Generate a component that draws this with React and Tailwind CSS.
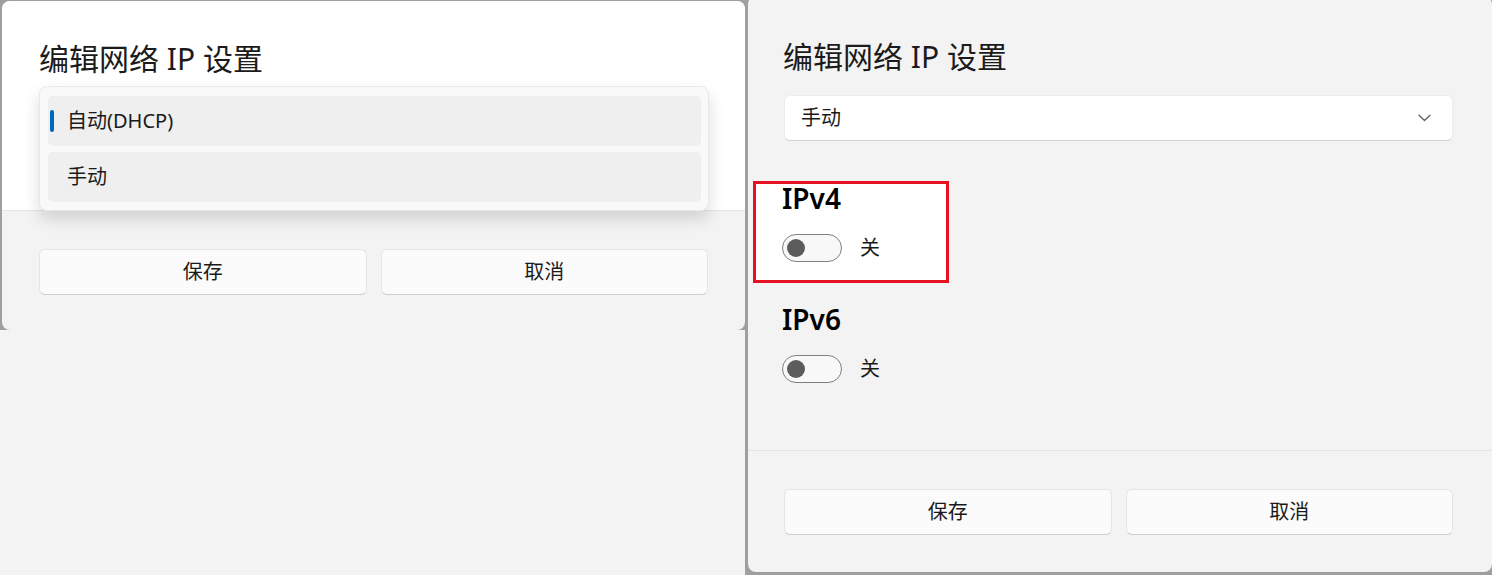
import React from "react";

function Button({ children }) {
  return (
    <button className="flex-1 h-[46px] rounded-[6px] bg-[#fbfbfb] border border-[#e5e5e5] border-b-[#cfcfcf] text-[20px] leading-[28px] text-[#1a1a1a] flex items-center justify-center">
      {children}
    </button>
  );
}

function Toggle() {
  return (
    <div className="w-[60px] h-[28px] rounded-full border-[1.5px] border-[#7f7f7f] bg-[#f8f8f8] flex items-center pl-[4px] shrink-0">
      <div className="w-[18px] h-[18px] rounded-full bg-[#5c5c5c]" />
    </div>
  );
}

function Section({ title, className = "" }) {
  return (
    <div className={"relative " + className}>
      <div className="text-[28px] leading-[36px] font-semibold text-[#000000]">{title}</div>
      <div className="mt-[18px] flex items-center gap-[18px]">
        <Toggle />
        <span className="text-[20px] leading-[28px] text-[#1a1a1a]">关</span>
      </div>
    </div>
  );
}

export default function App() {
  return (
    <div className="w-[1492px] h-[575px] overflow-hidden flex bg-[#f3f3f3] font-['Noto_Sans','Noto_Sans_CJK_SC',sans-serif]">
      {/* Left column */}
      <div className="w-[745px] flex flex-col shrink-0">
        <div className="h-[330px] bg-[#9f9f9f] pt-px pl-[2px]">
          <div className="relative h-full rounded-lg overflow-hidden flex flex-col bg-[#f3f3f3]">
            <div className="bg-white px-[37px] pt-[40px] pb-[69px]">
              <h1 className="text-[30px] leading-[36px] font-normal text-[#1b1b1b]">编辑网络 IP 设置</h1>
              <div className="mt-[18px] h-[46px] rounded-[6px] bg-white" />
            </div>
            <div className="flex-1 border-t border-[#e5e5e5] px-[37px] pt-[38px] flex gap-[14px]">
              <Button>保存</Button>
              <Button>取消</Button>
            </div>

            {/* Open dropdown popup */}
            <div className="absolute left-[37px] top-[85px] w-[670px] h-[125px] rounded-[8px] bg-[#f9f9f9] border border-[#e8e8e8] shadow-[0_8px_16px_rgba(0,0,0,0.14)] pl-[8px] pr-[7px] pt-[9px] flex flex-col gap-[6px]">
              <div className="relative h-[50px] rounded-[5px] bg-[#efefef] flex items-center pl-[19px]">
                <div className="absolute left-[2px] top-[14px] w-[4px] h-[22px] rounded-full bg-[#0067c0]" />
                <span className="text-[20px] leading-[28px] text-[#1a1a1a]">自动(DHCP)</span>
              </div>
              <div className="h-[50px] rounded-[5px] bg-[#efefef] flex items-center pl-[19px]">
                <span className="text-[20px] leading-[28px] text-[#1a1a1a]">手动</span>
              </div>
            </div>
          </div>
        </div>
        <div className="flex-1 bg-[#f3f3f3]" />
      </div>

      {/* Right column */}
      <div className="flex-1 bg-[#9f9f9f] pl-[3px] overflow-hidden">
        <div className="relative -mt-[4px] h-[576px] rounded-lg bg-[#f3f3f3] flex flex-col">
          <div className="absolute left-[5px] top-[185px] w-[196px] h-[102px] border-[3px] border-[#e81123] bg-white" />
          <div className="flex-1 pl-[36px] pr-[39px] pt-[43px]">
            <h1 className="relative text-[30px] leading-[36px] font-normal text-[#1b1b1b] -ml-px">编辑网络 IP 设置</h1>
            <div className="relative mt-[20px] h-[46px] rounded-[6px] bg-white border border-[#ececec] border-b-[#d2d2d2] flex items-center pl-[16px] pr-[21px]">
              <span className="flex-1 text-[20px] leading-[28px] text-[#1a1a1a]">手动</span>
              <svg width="13" height="8" viewBox="0 0 13 8" fill="none">
                <path d="M1 1.2 L6.5 6.5 L12 1.2" stroke="#5f5f5f" strokeWidth="1.3" strokeLinecap="round" strokeLinejoin="round" />
              </svg>
            </div>
            <Section title="IPv4" className="mt-[39px] -ml-[2px]" />
            <Section title="IPv6" className="mt-[39px] -ml-[2px]" />
          </div>
          <div className="border-t border-[#e5e5e5] pl-[36px] pr-[39px] pt-[38px] pb-[37px] flex gap-[14px]">
            <Button>保存</Button>
            <Button>取消</Button>
          </div>
        </div>
      </div>
    </div>
  );
}
